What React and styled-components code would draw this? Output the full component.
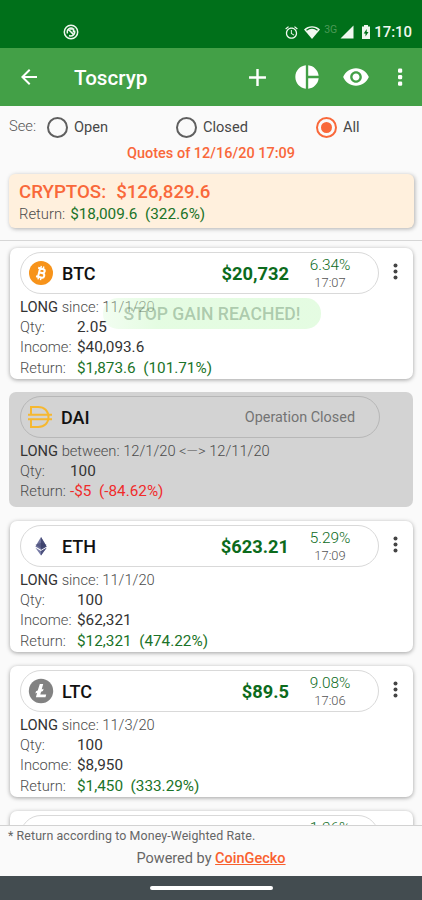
import React from "react";
import styled, { createGlobalStyle } from "styled-components";

const GlobalStyle = createGlobalStyle`
  * { box-sizing: border-box; }
  body {
    margin: 0;
    background: #fafafa;
    font-family: Roboto, "Liberation Sans", sans-serif;
  }
  svg { display: block; flex: none; }
`;

const Screen = styled.div`
  display: flex;
  flex-direction: column;
  width: 422px;
  height: 900px;
  overflow: hidden;
  background: #fafafa;
  white-space: pre;
`;

const StatusBar = styled.div`
  display: flex;
  align-items: center;
  flex: none;
  height: 48px;
  padding: 16px 10px 0 63px;
  background: #00701a;
  color: #f1f8f1;
`;

const StatusIcons = styled.div`
  display: flex;
  align-items: center;
  margin-left: auto;
`;

const Wifi = styled.svg`
  margin-left: 5px;
`;

const Network = styled.span`
  width: 14px;
  margin: -5px 2px 0 4px;
  font-size: 10.5px;
  line-height: 12px;
  color: #4b9a57;
`;

const Clock = styled.span`
  margin-left: 2px;
  font-size: 14.9px;
  font-weight: 500;
  line-height: 18px;
`;

const AppBar = styled.header`
  display: flex;
  align-items: center;
  flex: none;
  height: 58px;
  padding: 0 19px 0 17px;
  background: #43a047;
  color: #fff;
`;

const Title = styled.h1`
  flex: 1;
  margin: 2px 0 0 33px;
  font-size: 20.6px;
  font-weight: 500;
  line-height: 24px;
`;

const Actions = styled.div`
  display: flex;
  align-items: center;
  gap: 21px;
`;

const Overflow = styled.svg`
  margin-left: 6px;
`;

const Filter = styled.div`
  display: flex;
  align-items: center;
  flex: none;
  height: 38px;
  padding: 4px 0 0 9px;
`;

const FilterLabel = styled.span`
  width: 38px;
  margin-top: -3px;
  font-size: 14.7px;
  font-weight: 300;
  color: #555;
`;

const Option = styled.label`
  display: flex;
  align-items: center;
  gap: 6px;
  width: ${(props) => props.$width}px;
  font-size: 14.6px;
  color: #484848;
`;

const Radio = styled.span`
  display: flex;
  align-items: center;
  justify-content: center;
  width: 21px;
  height: 21px;
  border: 2px solid ${(props) => (props.$checked ? "#f9683a" : "#5f5f5f")};
  border-radius: 50%;

  &::after {
    content: "";
    width: 11px;
    height: 11px;
    border-radius: 50%;
    background: ${(props) => (props.$checked ? "#f9683a" : "transparent")};
  }
`;

const Quotes = styled.div`
  flex: none;
  height: 30px;
  padding-top: 1px;
  font-size: 14.5px;
  font-weight: 500;
  line-height: 18px;
  text-align: center;
  color: #f9683a;
`;

const Summary = styled.section`
  flex: none;
  height: 54px;
  margin: 0 8px 12px 9px;
  padding: 7px 0 0 10px;
  border-radius: 6px;
  background: #fff0dd;
  box-shadow: 1px 1px 4px rgba(0, 0, 0, 0.3);
`;

const Total = styled.div`
  display: flex;
  gap: 10px;
  font-size: 18.7px;
  font-weight: 500;
  line-height: 23px;
  color: #f9683a;
`;

const SummaryReturn = styled.div`
  display: flex;
  gap: 5px;
  font-size: 14.8px;
  font-weight: 300;
  line-height: 21px;
  color: #4c4c4c;
`;

const List = styled.main`
  flex: none;
  height: 586px;
  padding: 7px 9px 0 10px;
  overflow: hidden;
  border-top: 1px solid #d6d6d6;
  border-bottom: 1px solid #d2d2d2;
`;

const Card = styled.article`
  position: relative;
  height: ${(props) => (props.$closed ? 115 : 131)}px;
  margin: ${(props) => (props.$closed ? "-1px 0 14px -1px" : "0 0 14px")};
  padding: 4px 0 0 ${(props) => (props.$closed ? 11 : 10)}px;
  border-radius: 7px;
  background: ${(props) => (props.$closed ? "#d3d3d3" : "#fff")};
  box-shadow: ${(props) => (props.$closed ? "none" : "0 1px 4px rgba(0, 0, 0, 0.36)")};
`;

const CardHead = styled.div`
  display: flex;
  height: 44px;
`;

const Pill = styled.div`
  display: flex;
  align-items: center;
  width: ${(props) => (props.$closed ? 360 : 359)}px;
  height: 42px;
  padding-left: ${(props) => (props.$closed ? 6 : 7)}px;
  border: 1px solid ${(props) => (props.$closed ? "#b7b7b7" : "#d9d9d9")};
  border-radius: 21px;
`;

const Symbol = styled.strong`
  flex: 1;
  margin-left: 8px;
  font-size: 18px;
  font-weight: 500;
  color: #111;
`;

const Price = styled.span`
  font-size: 18.3px;
  font-weight: 700;
  color: #0c6b1c;
`;

const Change = styled.div`
  width: 82px;
  margin-right: 7px;
  font-size: 15.4px;
  font-weight: 300;
  line-height: 18px;
  text-align: center;
  color: #0c6b1c;

  small {
    display: block;
    font-size: 12.9px;
    line-height: 17px;
    color: #555;
  }
`;

const ClosedNote = styled.span`
  margin: 1px 24px 0 0;
  font-size: 14.4px;
  color: #737373;
`;

const MenuDots = styled.svg`
  margin: 10.500px 0 0 14px;
`;

const Line = styled.div`
  height: 20.7px;
  padding-top: 1px;
  font-size: 14.7px;
  font-weight: 300;
  line-height: 20.7px;
  color: #4c4c4c;

  b {
    font-weight: 400;
    color: #333;
  }
`;

const Row = styled(Line)`
  display: flex;
  padding-top: 0;
`;

const Label = styled.span`
  width: ${(props) => (props.$closed ? 50 : 57)}px;
`;

const tones = { gain: "#1b7328", loss: "#f02b2b", plain: "#333" };

const Value = styled.span`
  font-size: 15.3px;
  font-weight: 400;
  color: ${(props) => tones[props.$tone || "plain"]};
`;

const Alert = styled.div`
  position: absolute;
  top: 50px;
  left: 93px;
  width: 218px;
  height: 31px;
  border-radius: 15px;
  background: linear-gradient(90deg, rgba(212, 250, 208, 0.3), rgba(212, 250, 208, 0.62) 25%);
  font-size: 17.6px;
  font-weight: 500;
  line-height: 32px;
  text-align: center;
  color: rgba(70, 110, 75, 0.36);
`;

const Footer = styled.footer`
  flex: 1;
  font-size: 14.5px;
  line-height: 22px;
  text-align: center;
  color: #666;

  small {
    display: block;
    padding: 0 0 3px 8px;
    font-size: 12.4px;
    line-height: 19px;
    text-align: left;
    letter-spacing: 0.1px;
  }

  a {
    font-weight: 500;
    color: #f9602e;
    text-decoration: underline;
  }
`;

const NavBar = styled.div`
  display: flex;
  justify-content: center;
  flex: none;
  height: 24px;
  padding-top: 10px;
  background: #434c50;

  &::after {
    content: "";
    width: 123px;
    height: 4px;
    border-radius: 2px;
    background: #fff;
  }
`;

const MaterialIcon = ({ d, size = 24 }) => (
  <svg width={size} height={size} viewBox="0 0 24 24" fill="currentColor">
    <path d={d} />
  </svg>
);

const CoinIcon = ({ symbol }) => {
  if (symbol === "BTC") {
    return (
      <svg width="26" height="26" viewBox="0 0 26 26" fill="none">
        <circle cx="13" cy="13" r="12" fill="#f7931a" />
        <g transform="rotate(14 13 13)" stroke="#fff" strokeWidth="2">
          <path d="M9 8.6h4.8c3.2 0 3.2 4.2 0 4.2H11h3.2c3.5 0 3.5 4.6 0 4.6H9M11 8.6v8.8" />
          <path d="M11.6 6v2.5M14.2 6v2.5M11.6 17.5V20M14.2 17.5V20" strokeWidth="1.4" />
        </g>
      </svg>
    );
  }
  if (symbol === "DAI") {
    return (
      <svg width="26" height="26" viewBox="0 0 26 26" fill="none" stroke="#f6b830" strokeWidth="2">
        <path d="M4 10.7V3h7.200c6.200 0 10.300 4 10.300 10s-4.100 10-10.300 10H4v-7.700M1 10.700h24M1 15.300h24" />
      </svg>
    );
  }
  if (symbol === "ETH") {
    return (
      <svg width="26" height="26" viewBox="0 0 26 26">
        <path d="M13 4l5.600 9.500L13 16.800 7.400 13.500z" fill="#6f739c" />
        <path d="M13 4v12.800l5.600-3.300z" fill="#454a75" />
        <path d="M7.400 11.800L13 9.800l5.600 2L13 15z" fill="#3a3e68" opacity=".5" />
        <path d="M7.400 14.800L13 18.100l5.600-3.300L13 22.500z" fill="#777ba6" />
        <path d="M13 18.100l5.600-3.300L13 22.500z" fill="#4d517d" />
      </svg>
    );
  }
  if (symbol === "LTC") {
    return (
      <svg width="26" height="26" viewBox="0 0 26 26">
        <circle cx="13" cy="13" r="12.2" fill="#828282" />
        <path d="M11.800 6h3.400l-1.500 5.500 1.900-.7-.6 2.200-1.900.7-.8 2.900h5.900l-.7 2.700H7.900l1.200-4.500-1.700.6.6-2.200 1.700-.6z" fill="#fff" />
      </svg>
    );
  }
  return <svg width="26" height="26" />;
};

const operations = [
  {
    symbol: "BTC", price: "$20,732", change: "6.34%", time: "17:07", since: "11/1/20",
    qty: "2.05", income: "$40,093.6", result: "$1,873.6  (101.71%)", alert: "STOP GAIN REACHED!",
  },
  {
    symbol: "DAI", closed: true, since: "12/1/20 <—> 12/11/20",
    qty: "100", result: "-$5  (-84.62%)", loss: true,
  },
  {
    symbol: "ETH", price: "$623.21", change: "5.29%", time: "17:09", since: "11/1/20",
    qty: "100", income: "$62,321", result: "$12,321  (474.22%)",
  },
  {
    symbol: "LTC", price: "$89.5", change: "9.08%", time: "17:06", since: "11/3/20",
    qty: "100", income: "$8,950", result: "$1,450  (333.29%)",
  },
  { symbol: "", price: "", change: "1.36%" },
];

function Operation({ item }) {
  const { closed } = item;
  return (
    <Card $closed={closed}>
      <CardHead>
        <Pill $closed={closed}>
          <CoinIcon symbol={item.symbol} />
          <Symbol>{item.symbol}</Symbol>
          {closed ? (
            <ClosedNote>Operation Closed</ClosedNote>
          ) : (
            <>
              <Price>{item.price}</Price>
              <Change>
                {item.change}
                <small>{item.time || " "}</small>
              </Change>
            </>
          )}
        </Pill>
        {!closed && (
          <MenuDots width="5" height="17" viewBox="0 0 5 17" fill="#444">
            <circle cx="2.5" cy="2.5" r="2" />
            <circle cx="2.5" cy="8.5" r="2" />
            <circle cx="2.5" cy="14.5" r="2" />
          </MenuDots>
        )}
      </CardHead>
      {item.since && (
        <>
          <Line>
            <b>LONG</b> {closed ? "between" : "since"}: {item.since}
          </Line>
          <Row>
            <Label $closed={closed}>Qty:</Label>
            <Value>{item.qty}</Value>
          </Row>
          {item.income && (
            <Row>
              <Label>Income:</Label>
              <Value>{item.income}</Value>
            </Row>
          )}
          <Row>
            <Label $closed={closed}>Return:</Label>
            <Value $tone={item.loss ? "loss" : "gain"}>{item.result}</Value>
          </Row>
        </>
      )}
      {item.alert && <Alert>{item.alert}</Alert>}
    </Card>
  );
}

export default function App() {
  return (
    <Screen>
      <GlobalStyle />
      <StatusBar>
        <svg width="16" height="16" viewBox="0 0 16 16" fill="none" stroke="currentColor">
          <circle cx="8" cy="8" r="6.7" strokeWidth="1.5" />
          <path d="M4.500 9.500a4 4 0 0 1 5.500-5M11.500 6.500a4 4 0 0 1-5.500 5" strokeWidth="1.4" />
          <path d="M5 5l6 6M7 5h3.500v3.500" strokeWidth="1.6" />
        </svg>
        <StatusIcons>
          <MaterialIcon
            size={15}
            d="M22 5.720l-4.600-3.860-1.290 1.530 4.600 3.860L22 5.720zM7.880 3.390L6.600 1.860 2 5.710l1.290 1.530 4.590-3.850zM12.500 8H11v6l4.750 2.850.75-1.230-4-2.370V8zM12 4c-4.970 0-9 4.030-9 9s4.020 9 9 9c4.970 0 9-4.030 9-9s-4.030-9-9-9zm0 16c-3.870 0-7-3.130-7-7s3.130-7 7-7 7 3.130 7 7-3.130 7-7 7z"
          />
          <Wifi width="16" height="13" viewBox="0 0 16 13">
            <path d="M0 3.500C4.500-.8 11.500-.8 16 3.500L8 13z" fill="#f1f8f1" />
            <path d="M2.500 4.300c3.300-2.500 7.700-2.500 11 0" fill="none" stroke="#00701a" strokeWidth="1.2" />
          </Wifi>
          <Network>3G</Network>
          <svg width="14" height="14" viewBox="0 0 14 14" fill="currentColor">
            <path d="M13.500.5v13H.5z" />
          </svg>
          <svg width="18" height="14" viewBox="3 0 18 14">
            <path d="M11 1.500h2V0h4v1.500h2V14h-8z" fill="#f1f8f1" />
            <path d="M15.700 4l-3 4.500h1.800v3l3-4.500h-1.800z" fill="#00701a" />
          </svg>
          <Clock>17:10</Clock>
        </StatusIcons>
      </StatusBar>
      <AppBar>
        <MaterialIcon d="M20 11H7.830l5.590-5.590L12 4l-8 8 8 8 1.410-1.410L7.830 13H20v-2z" />
        <Title>Toscryp</Title>
        <Actions>
          <MaterialIcon size={29} d="M19 13h-6v6h-2v-6H5v-2h6V5h2v6h6v2z" />
          <MaterialIcon size={28} d="M11 2v20c-5.070-.5-9-4.790-9-10s3.930-9.500 9-10zm2.030 0v8.990H22c-.47-4.740-4.240-8.520-8.970-8.990zm0 11.010V22c4.740-.47 8.500-4.250 8.970-8.990h-8.970z" />
          <MaterialIcon size={28} d="M12 4.500C7 4.500 2.730 7.610 1 12c1.730 4.390 6 7.500 11 7.500s9.270-3.110 11-7.500c-1.730-4.390-6-7.500-11-7.500zM12 17c-2.760 0-5-2.240-5-5s2.240-5 5-5 5 2.240 5 5-2.240 5-5 5zm0-8c-1.660 0-3 1.340-3 3s1.340 3 3 3 3-1.340 3-3-1.340-3-3-3z" />
          <Overflow width="6" height="20" viewBox="0 0 6 20" fill="currentColor">
            <rect x="1" y="1.5" width="4.2" height="4.2" rx="1.2" />
            <rect x="1" y="8" width="4.2" height="4.2" rx="1.2" />
            <rect x="1" y="14.5" width="4.2" height="4.2" rx="1.2" />
          </Overflow>
        </Actions>
      </AppBar>
      <Filter>
        <FilterLabel>See:</FilterLabel>
        <Option $width={129}><Radio />Open</Option>
        <Option $width={140}><Radio />Closed</Option>
        <Option $width={60}><Radio $checked />All</Option>
      </Filter>
      <Quotes>Quotes of 12/16/20 17:09</Quotes>
      <Summary>
        <Total>
          <span>CRYPTOS:</span>
          <span>$126,829.6</span>
        </Total>
        <SummaryReturn>
          <span>Return:</span>
          <Value $tone="gain">$18,009.6  (322.6%)</Value>
        </SummaryReturn>
      </Summary>
      <List>
        {operations.map((item, i) => (
          <Operation key={i} item={item} />
        ))}
      </List>
      <Footer>
        <small>* Return according to Money-Weighted Rate.</small>
        Powered by <a>CoinGecko</a>
      </Footer>
      <NavBar />
    </Screen>
  );
}
